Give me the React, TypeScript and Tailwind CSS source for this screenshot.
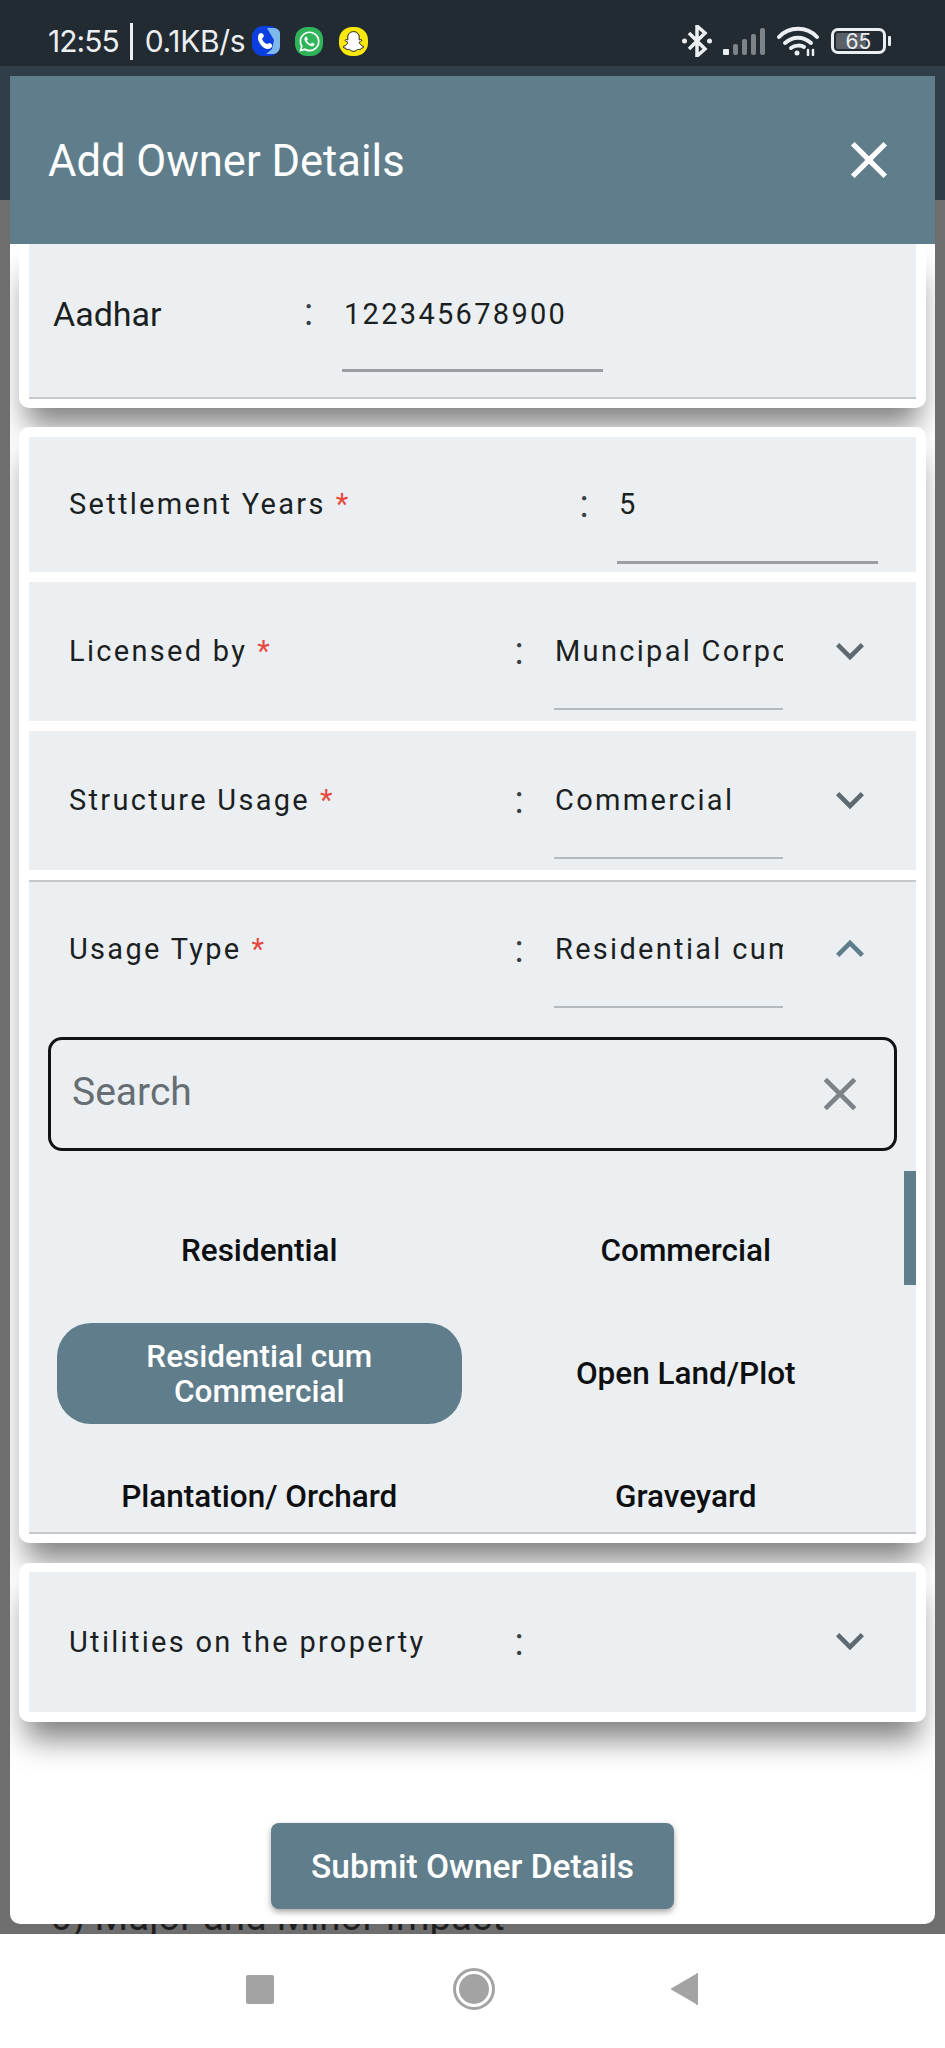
import React from "react";
import { MdClose, MdKeyboardArrowDown, MdKeyboardArrowUp } from "react-icons/md";
import { FaWhatsapp, FaSnapchatGhost } from "react-icons/fa";

function Label({ text, star = true }: { text: string; star?: boolean }) {
  return (
    <span className="whitespace-nowrap text-[29px] leading-[36px] tracking-[2.3px] text-[#1c1f22]">
      {text}
      {star && <span className="ml-[10px] text-[#e5483d]">*</span>}
    </span>
  );
}

function Colon({ className }: { className: string }) {
  return <span className={`text-[38px] leading-[36px] text-[#3a3f44] ${className}`}>:</span>;
}

function Field({ value, className, line }: { value: string; className: string; line: string }) {
  return (
    <div className={`overflow-hidden whitespace-nowrap text-[29px] leading-[36px] tracking-[2.3px] text-[#1c1f22] ${className} ${line}`}>
      {value}
    </div>
  );
}

function SelectRow({ label, value, star = true, open = false, className }: { label: string; value: string; star?: boolean; open?: boolean; className: string }) {
  return (
    <div className={`flex items-start pl-[40px] ${className}`}>
      <div className="w-[430px]">
        <Label text={label} star={star} />
      </div>
      <Colon className="w-[40px] text-center" />
      <Field value={value} className="ml-[15px] h-[77px] w-[229px] pl-[1px]" line="border-b-2 border-[#b4b9bd]" />
      <div className="-mt-[10px] ml-[39px]">
        {open ? <MdKeyboardArrowUp className="text-[56px] text-[#607d8b]" /> : <MdKeyboardArrowDown className="text-[56px] text-[#5f6a70]" />}
      </div>
    </div>
  );
}

function Option({ text, selected = false }: { text: string; selected?: boolean }) {
  return (
    <div className="px-[11px] py-[11px]">
      <div className={`flex h-[101px] items-center justify-center rounded-[34px] px-[30px] text-center text-[31.5px] font-medium leading-[35px] ${selected ? "bg-[#607d8b] text-white" : "text-[#0d0f11]"}`}>
        {text}
      </div>
    </div>
  );
}

function StatusBar() {
  return (
    <div className="flex h-[66px] shrink-0 items-center justify-between bg-[#222a32] pl-[48px] pr-[54px] pt-[16px] font-['Inter',sans-serif] text-[#eceff1]">
      <div className="flex items-center">
        <span className="text-[30px] tracking-[-1px]">12:55</span>
        <span className="ml-[11px] h-[37px] w-[3px] bg-[#eceff1]"></span>
        <span className="ml-[12px] text-[30px] tracking-[-0.3px]">0.1KB/s</span>
        <svg viewBox="0 0 28 30" className="ml-[7px] h-[30px] w-[28px]">
          <rect x="0" y="0" width="28" height="30" rx="11" fill="#0c3fe0" />
          <path d="M15 2h7a6 6 0 0 1 6 7v11a8 8 0 0 1-6 8h-8l6-5 2-9z" fill="#7db9ec" />
          <path d="M7 8c2-2 4-1 5 2l-2 3c1 2 2 4 5 5l3-1c2 1 3 3 1 5-3 2-7 1-10-3S5 11 7 8z" fill="#fff" />
        </svg>
        <div className="ml-[15px] flex h-[29px] w-[28px] items-center justify-center rounded-[12px] bg-[#2fb45a]">
          <FaWhatsapp className="text-[23px] text-white" />
        </div>
        <div className="ml-[16px] flex h-[29px] w-[29px] items-center justify-center rounded-[13px] bg-[#fbe90b]">
          <FaSnapchatGhost className="text-[21px] text-white [stroke-width:24px] [stroke:#1a1a1a]" />
        </div>
      </div>
      <div className="flex items-center">
        <svg viewBox="0 0 30 32" className="h-[32px] w-[30px]" fill="none" stroke="#eceff1" strokeWidth="3.5">
          <path d="M7 8l16 16-8 7V1l8 7L7 24" />
          <circle cx="2.5" cy="16" r="2.5" fill="#eceff1" stroke="none" />
          <circle cx="27.5" cy="16" r="2.5" fill="#eceff1" stroke="none" />
        </svg>
        <svg viewBox="0 0 43 27" className="ml-[11px] h-[27px] w-[43px]">
          <rect x="0" y="21" width="6" height="6" rx="1" fill="#eceff1" />
          <rect x="10" y="16" width="5" height="11" rx="2" fill="#7e8388" />
          <rect x="19" y="11" width="5" height="16" rx="2" fill="#7e8388" />
          <rect x="28" y="6" width="5" height="21" rx="2" fill="#7e8388" />
          <rect x="37" y="0" width="5" height="27" rx="2" fill="#7e8388" />
        </svg>
        <svg viewBox="0 0 42 30" className="ml-[11px] h-[30px] w-[42px]" fill="none" stroke="#eceff1" strokeWidth="4" strokeLinecap="round">
          <path d="M2 11C12 0 30 0 40 11" />
          <path d="M8 17c8-7 18-7 26 0" />
          <path d="M14 22c4-3 10-3 13-1" />
          <circle cx="20" cy="27" r="2.5" fill="#eceff1" stroke="none" />
          <path d="M31 24v5M36 24v5" strokeWidth="2.5" />
        </svg>
        <div className="relative ml-[12px] flex h-[26px] w-[55px] items-center justify-center rounded-[7px] border-[3px] border-[#eceff1] text-[21px] leading-none">
          <span className="absolute bottom-[2px] left-[2px] top-[2px] w-[30px] rounded-[2px] bg-[#5a6066]"></span>
          <span className="relative">65</span>
        </div>
        <span className="ml-[2px] h-[10px] w-[3px] rounded-[1px] bg-[#eceff1]"></span>
      </div>
    </div>
  );
}

function NavBar() {
  return (
    <div className="flex h-[114px] shrink-0 items-center justify-center bg-white pb-[18px] pt-[14px]">
      <div className="h-[29px] w-[28px] rounded-[2px] bg-[#a3a3a3]"></div>
      <svg viewBox="0 0 42 42" className="ml-[179px] h-[42px] w-[42px]">
        <circle cx="21" cy="21" r="19.5" fill="none" stroke="#a3a3a3" strokeWidth="3" />
        <circle cx="21" cy="21" r="15" fill="#a3a3a3" />
      </svg>
      <svg viewBox="0 0 28 32" className="ml-[176px] h-[32px] w-[28px]">
        <path d="M27 1v30a1 1 0 0 1-2 0L1 17a1 1 0 0 1 0-2L25 1a1 1 0 0 1 2 0z" fill="#a3a3a3" />
      </svg>
    </div>
  );
}

export default function App() {
  return (
    <div className="relative flex h-[2048px] w-[945px] flex-col overflow-hidden bg-white font-['Roboto',sans-serif]">
      <StatusBar />
      <div className="h-[134px] shrink-0 bg-[#2f3e48]"></div>
      <div className="flex flex-1 flex-col justify-end overflow-hidden bg-[#6e6e6e]">
        <div className="-mb-[5px] pl-[50px] text-[38.5px] leading-[44px] text-[#1e1e1e]">6) Major and Minor Impact</div>
      </div>
      <NavBar />

      <div className="absolute left-[10px] top-[76px] flex h-[1848px] w-[925px] flex-col overflow-hidden rounded-b-[10px] bg-white">
        <div className="flex h-[168px] shrink-0 items-center justify-between bg-[#607d8b] pl-[38px] pr-[35px] text-white">
          <span className="mt-[4px] text-[43.5px] leading-[50px]">Add Owner Details</span>
          <MdClose className="text-[62px]" />
        </div>

        <div className="flex flex-col">
          <div className="mx-[9px] rounded-b-[10px] bg-white px-[10px] pb-[9px] shadow-[0_24px_30px_-7px_rgba(0,0,0,0.5)]">
            <div className="flex h-[155px] items-start border-b-2 border-[#c5c9cc] bg-[#ebeff2] pl-[24px] pt-[50px]">
              <span className="w-[251px] text-[34px] leading-[40px] text-[#1c1f22]">Aadhar</span>
              <Colon className="w-[17px]" />
              <Field value="122345678900" className="ml-[21px] mt-[2px] h-[76px] w-[261px] pl-[2px]" line="border-b-[3px] border-[#9a9ea3]" />
            </div>
          </div>

          <div className="relative mx-[9px] mt-[19px] rounded-[10px] bg-white px-[10px] pb-[9px] pt-[10px] shadow-[0_24px_30px_-7px_rgba(0,0,0,0.5)]">
            <div className="flex h-[135px] items-start bg-[#ebeff2] pl-[40px] pt-[49px]">
              <div className="w-[495px]">
                <Label text="Settlement Years" />
              </div>
              <Colon className="w-[40px] text-center" />
              <Field value="5" className="ml-[13px] h-[78px] w-[261px] pl-[2px]" line="border-b-[3px] border-[#9a9ea3]" />
            </div>
            <div className="mt-[10px] bg-[#ebeff2]">
              <SelectRow label="Licensed by" value="Muncipal Corporation" className="h-[139px] pt-[51px]" />
            </div>
            <div className="mt-[10px] bg-[#ebeff2]">
              <SelectRow label="Structure Usage" value="Commercial" className="h-[139px] pt-[51px]" />
            </div>
            <div className="mt-[10px] border-b-2 border-t-2 border-[#c5c9cc] bg-[#ebeff2]">
              <SelectRow label="Usage Type" value="Residential cum Commercial" open className="h-[125px] pt-[49px]" />
              <div className="mx-[19px] mt-[30px] flex h-[114px] items-center justify-between rounded-[14px] border-[3px] border-[#111417] pl-[21px] pr-[26px]">
                <span className="mb-[3px] text-[39px] text-[#666e73]">Search</span>
                <MdClose className="text-[56px] text-[#7b8288]" />
              </div>
              <div className="relative h-[381px] overflow-hidden">
                <span className="absolute right-0 top-[20px] h-[114px] w-[12px] bg-[#607d8b]"></span>
                <div className="grid grid-cols-2 px-[17px] pt-[38px]">
                  <Option text="Residential" />
                  <Option text="Commercial" />
                  <Option text="Residential cum Commercial" selected />
                  <Option text="Open Land/Plot" />
                  <Option text="Plantation/ Orchard" />
                  <Option text="Graveyard" />
                </div>
              </div>
            </div>
          </div>

          <div className="relative mx-[9px] mt-[20px] rounded-[10px] bg-white px-[10px] pb-[10px] pt-[9px] shadow-[0_24px_30px_-7px_rgba(0,0,0,0.5)]">
            <div className="flex h-[140px] items-start bg-[#ebeff2] pl-[40px] pt-[52px]">
              <div className="w-[430px]">
                <Label text="Utilities on the property" star={false} />
              </div>
              <Colon className="w-[40px] text-center" />
              <div className="-mt-[11px] ml-[283px]">
                <MdKeyboardArrowDown className="text-[56px] text-[#5f6a70]" />
              </div>
            </div>
          </div>
        </div>

        <button className="mx-auto mt-[101px] flex h-[86px] w-[403px] items-center justify-center rounded-[8px] bg-[#607d8b] pt-[2px] text-[33.5px] font-medium text-white shadow-[0_3px_6px_rgba(0,0,0,0.35)]">
          Submit Owner Details
        </button>
      </div>
    </div>
  );
}
